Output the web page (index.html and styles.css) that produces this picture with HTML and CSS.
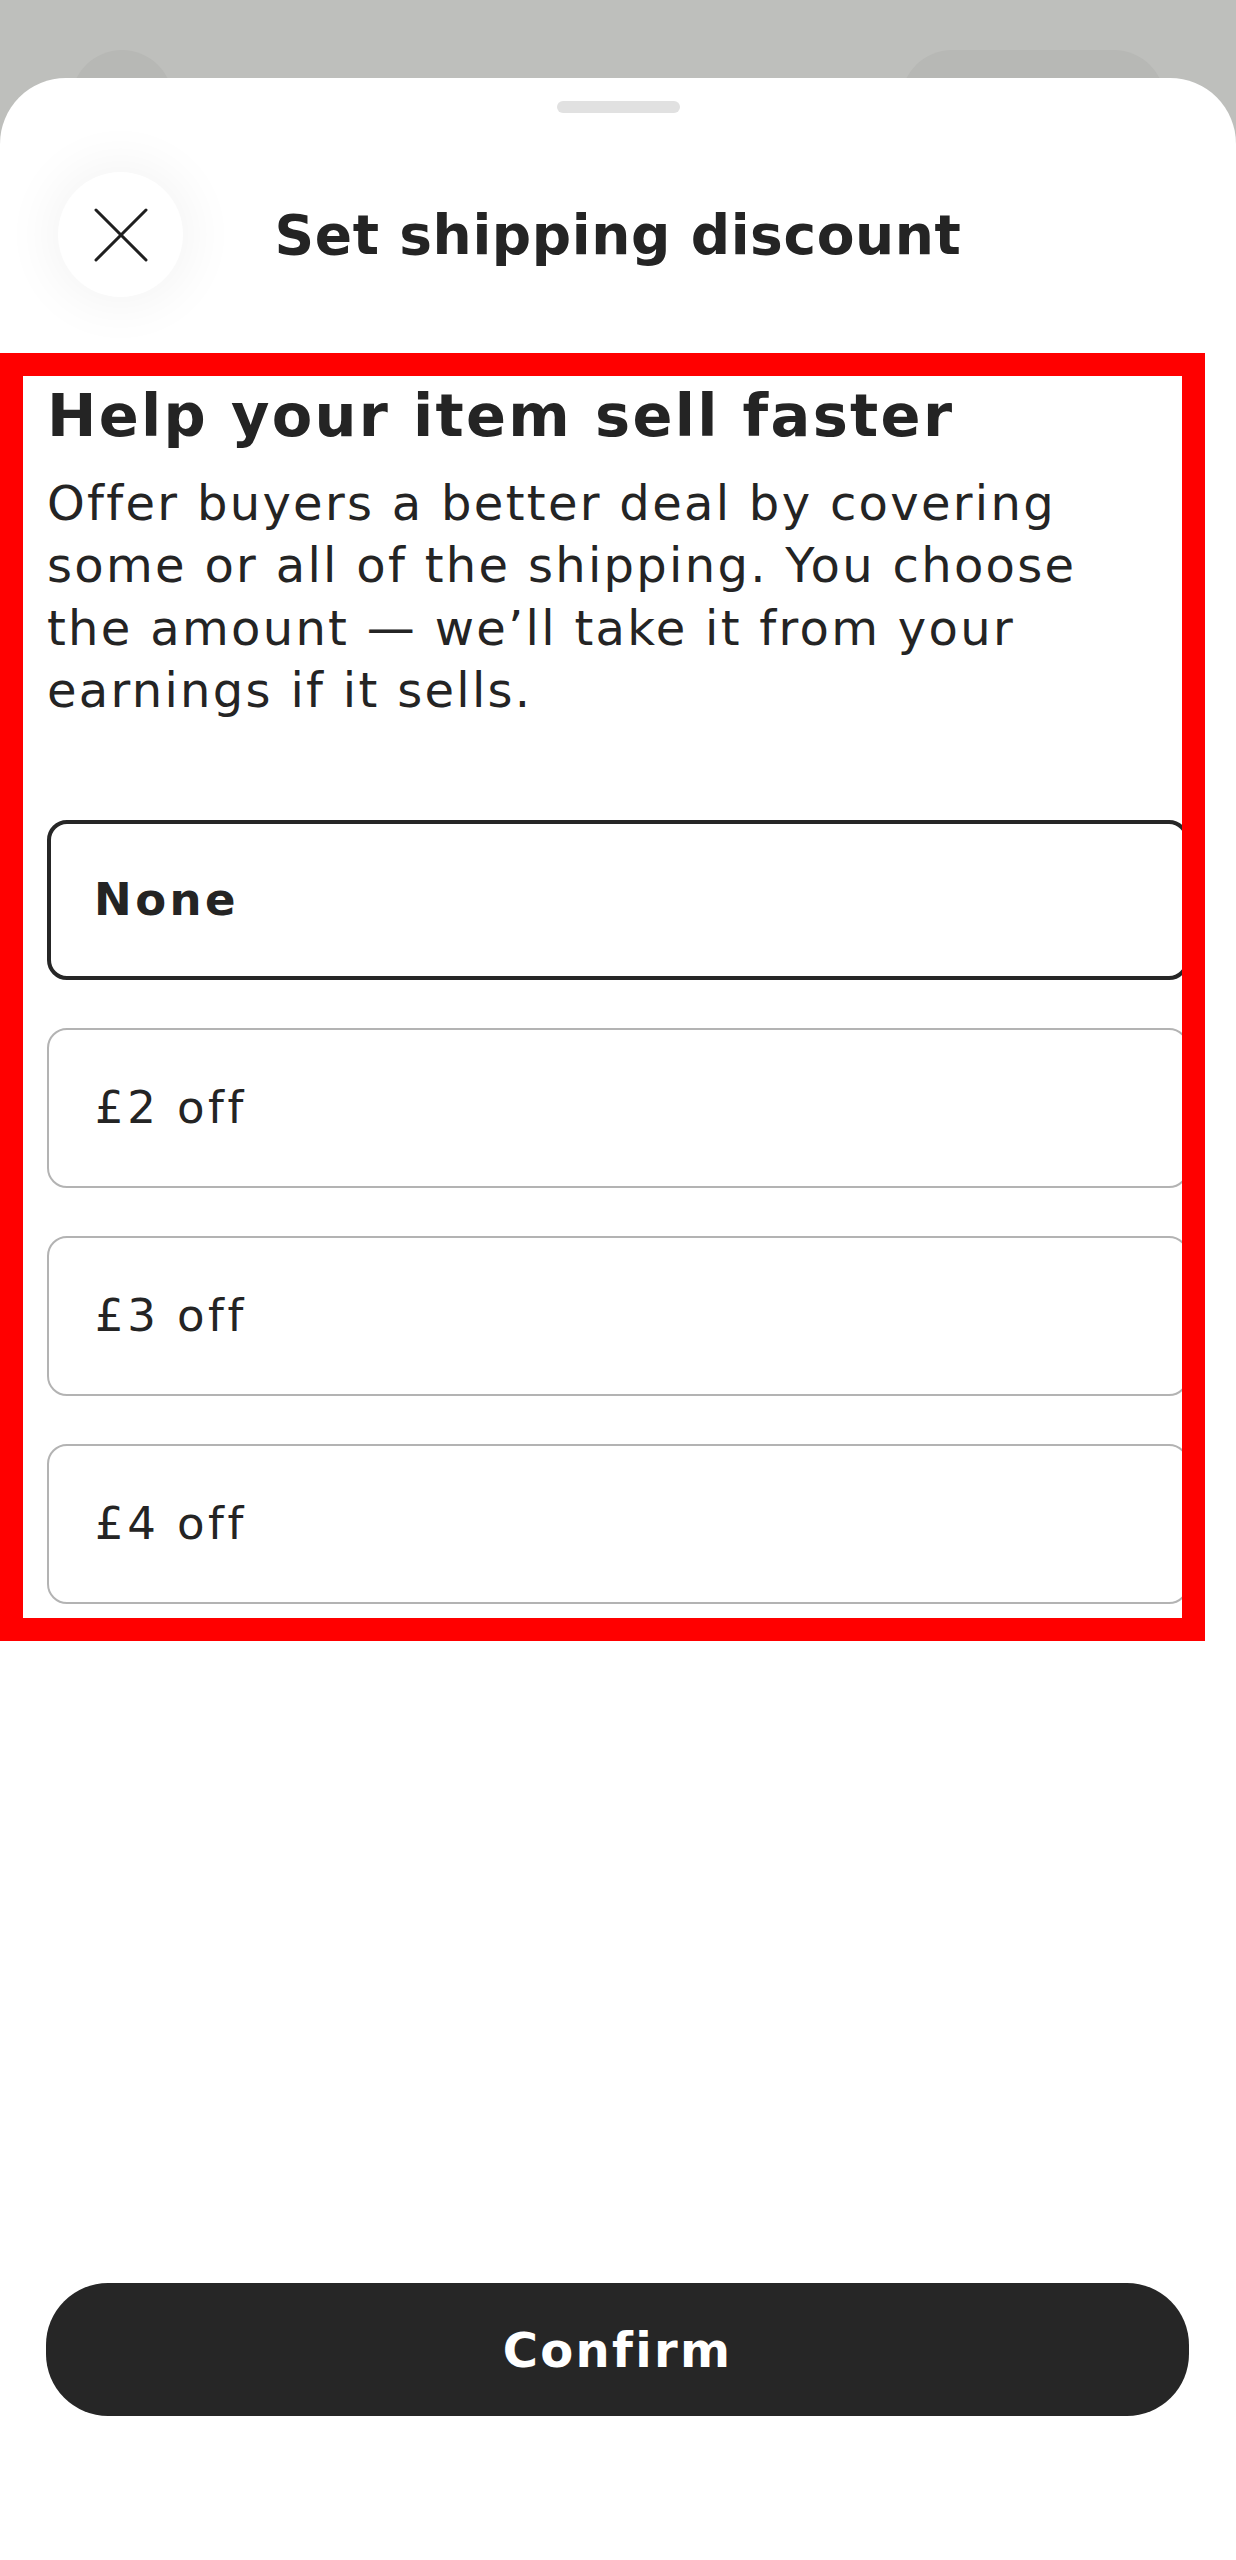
FILE: index.html
```html
<!doctype html>
<html>
    <head>
        <link rel="stylesheet" href="styles.css">
    </head>
    <body>
        <div class="behind">
            <span class="behind-round"></span>
            <span class="behind-pill"></span>
        </div>
        <section class="sheet">
            <div class="handle"></div>
            <header class="sheet-header">
                <button class="close" aria-label="Close">
                    <svg width="54" height="54" viewBox="0 0 54 54">
                        <path d="M2 2 L52 52 M52 2 L2 52" stroke="#1f1f1f" stroke-width="3" stroke-linecap="round" fill="none" />
                    </svg>
                </button>
                <h1 class="title">Set shipping discount</h1>
                <span></span>
            </header>
            <main class="content">
                <h2 class="headline">Help your item sell faster</h2>
                <p class="intro">Offer buyers a better deal by covering<br>some or all of the shipping. You choose<br>the amount — we’ll take it from your<br>earnings if it sells.</p>
                <ul class="options">
                    <li class="option selected">None</li>
                    <li class="option">£2 off</li>
                    <li class="option">£3 off</li>
                    <li class="option">£4 off</li>
                </ul>
            </main>
            <footer class="footer">
                <button class="confirm">Confirm</button>
            </footer>
        </section>
        <div class="highlight"></div>
    </body>
</html>
```

FILE: styles.css
```css
* {
    margin: 0;
    padding: 0;
    box-sizing: border-box;
}
body {
    position: relative;
    background: #bebfbc;
    font-family: "DejaVu Sans", sans-serif;
    color: #242424;
}
.behind {
    height: 78px;
    overflow: hidden;
    display: flex;
    justify-content: space-between;
    padding: 50px 71px 0 71px;
}
.behind-round {
    width: 102px;
    height: 102px;
    border-radius: 50%;
    background: #b7b8b5;
}
.behind-pill {
    width: 264px;
    height: 102px;
    border-radius: 51px;
    background: #b7b8b5;
}
.sheet {
    background: white;
    border-radius: 66px 66px 0 0;
    min-height: calc(100vh - 78px);
    display: flex;
    flex-direction: column;
}
.handle {
    width: 123px;
    height: 12px;
    border-radius: 6px;
    background: #e1e1e1;
    margin: 23px auto 0 auto;
}
.sheet-header {
    display: grid;
    grid-template-columns: 1fr auto 1fr;
    align-items: center;
    padding: 0 58px;
    margin-top: 59px;
}
.close {
    width: 125px;
    height: 125px;
    border-radius: 50%;
    border: none;
    background: white;
    box-shadow: 0 0 50px 12px rgba(0, 0, 0, 0.045);
    display: flex;
    align-items: center;
    justify-content: center;
}
.title {
    font-size: 55px;
    font-weight: bold;
    letter-spacing: 0.6px;
}
.content {
    padding: 84px 47px 0 47px;
}
.headline {
    font-size: 59px;
    line-height: 1.2;
    font-weight: bold;
    letter-spacing: 2.3px;
}
.intro {
    margin-top: 20px;
    font-size: 48px;
    line-height: 62.5px;
    letter-spacing: 2.3px;
}
.options {
    list-style: none;
    margin-top: 98px;
    display: flex;
    flex-direction: column;
    gap: 48px;
}
.option {
    height: 160px;
    border: 2px solid #b3b3b3;
    border-radius: 20px;
    display: flex;
    align-items: center;
    padding-left: 46px;
    font-size: 45px;
    letter-spacing: 3.5px;
}
.option.selected {
    border: 4px solid #262626;
    padding-left: 43px;
    font-weight: bold;
}
.footer {
    margin-top: auto;
    padding: 0 47px 144px 46px;
}
.confirm {
    width: 100%;
    height: 133px;
    border: none;
    border-radius: 62px;
    background: #262626;
    color: white;
    font-family: "DejaVu Sans", sans-serif;
    font-size: 48px;
    font-weight: bold;
    letter-spacing: 2.3px;
}
.highlight {
    position: absolute;
    left: 0;
    top: 353px;
    width: 1205px;
    height: 1288px;
    border: 23px solid #ff0000;
}
```
